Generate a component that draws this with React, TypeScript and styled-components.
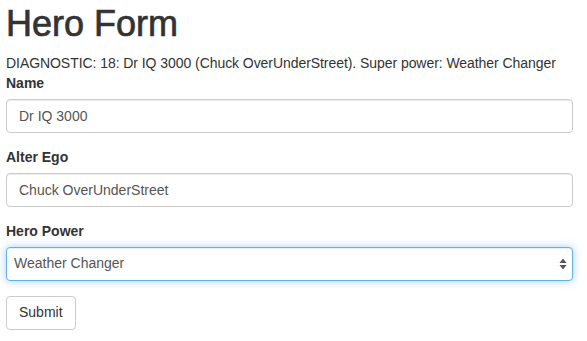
import * as React from 'react';
import styled, { createGlobalStyle } from 'styled-components';

const GlobalStyle = createGlobalStyle`
  html, body {
    margin: 0;
    padding: 0;
    background: #fff;
  }
  body {
    font-family: "Liberation Sans", Arial, sans-serif;
    font-size: 14px;
    line-height: 1.42857;
    color: #333;
  }
  * {
    box-sizing: border-box;
  }
`;

const Container = styled.div`
  padding: 4px 14px 0 6px;
`;

const Title = styled.h1`
  margin: 0 0 10px;
  font-size: 36px;
  font-weight: 500;
  line-height: 1.1;
  -webkit-text-stroke: 0.7px #333;
`;

const Diagnostic = styled.div`
  white-space: nowrap;
  letter-spacing: -0.06px;
`;

const FormGroup = styled.div`
  margin-bottom: 15px;
`;

const Label = styled.label`
  display: inline-block;
  margin-bottom: 5px;
  font-weight: 700;
`;

const Input = styled.input`
  display: block;
  width: 100%;
  height: 34px;
  padding: 6px 12px;
  font: inherit;
  font-size: 14px;
  color: #555;
  background: #fff;
  border: 1px solid #ccc;
  border-radius: 4px;
  box-shadow: inset 0 1px 1px rgba(0, 0, 0, 0.075);
  outline: none;
`;

const SelectWrap = styled.div`
  position: relative;
`;

const Select = styled.select<{ $focused?: boolean }>`
  display: block;
  width: 100%;
  height: 34px;
  padding: 6px 24px 6px 7px;
  font: inherit;
  font-size: 14px;
  color: #555;
  background: #fff;
  appearance: none;
  border: 1px solid ${(p) => (p.$focused ? '#66afe9' : '#ccc')};
  border-radius: 4px;
  box-shadow: ${(p) =>
    p.$focused
      ? 'inset 0 1px 1px rgba(0,0,0,.075), 0 0 8px rgba(102,175,233,.6)'
      : 'inset 0 1px 1px rgba(0,0,0,.075)'};
  outline: none;
`;

const Arrows = styled.svg`
  position: absolute;
  right: 6px;
  top: 11px;
  pointer-events: none;
`;

const Button = styled.button`
  display: inline-block;
  padding: 6px 12px;
  font: inherit;
  font-size: 14px;
  line-height: 1.42857;
  color: #333;
  background: #fff;
  border: 1px solid #ccc;
  border-radius: 4px;
  cursor: pointer;
`;

export default function App() {
  const [name, setName] = React.useState('Dr IQ 3000');
  const [alterEgo, setAlterEgo] = React.useState('Chuck OverUnderStreet');
  const [power, setPower] = React.useState('Weather Changer');
  const powers = ['Really Smart', 'Super Flexible', 'Super Hot', 'Weather Changer'];

  return (
    <Container>
      <GlobalStyle />
      <Title>Hero Form</Title>
      <Diagnostic>
        DIAGNOSTIC: 18: {name} ({alterEgo}). Super power: {power}
      </Diagnostic>
      <form onSubmit={(e) => e.preventDefault()}>
        <FormGroup>
          <Label htmlFor="name">Name</Label>
          <Input id="name" value={name} onChange={(e) => setName(e.target.value)} />
        </FormGroup>
        <FormGroup>
          <Label htmlFor="alterEgo">Alter Ego</Label>
          <Input id="alterEgo" value={alterEgo} onChange={(e) => setAlterEgo(e.target.value)} />
        </FormGroup>
        <FormGroup>
          <Label htmlFor="power">Hero Power</Label>
          <SelectWrap>
            <Select id="power" $focused value={power} onChange={(e) => setPower(e.target.value)}>
              {powers.map((p) => (
                <option key={p}>{p}</option>
              ))}
            </Select>
            <Arrows width="8" height="12" viewBox="0 0 8 12">
              <path d="M4 0.5 L7.5 5 L0.5 5 Z" fill="#555" />
              <path d="M0.5 7 L7.5 7 L4 11.5 Z" fill="#555" />
            </Arrows>
          </SelectWrap>
        </FormGroup>
        <Button type="submit">Submit</Button>
      </form>
    </Container>
  );
}
